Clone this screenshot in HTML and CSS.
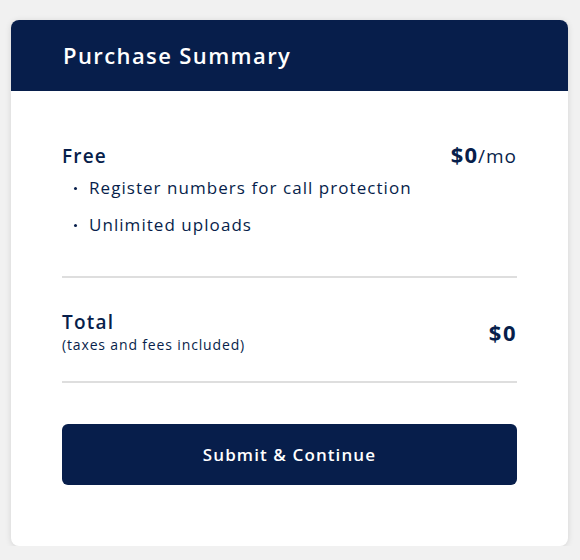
FILE: index.html
```html
<!DOCTYPE html>
<html>
<head>
<meta charset="utf-8">
<link rel="stylesheet" href="styles.css">
</head>
<body>
<div class="card">
  <div class="card-header">
    <h1 class="title">Purchase Summary</h1>
  </div>
  <div class="card-body">
    <div class="plan">
      <div class="row">
        <div class="plan-name">Free</div>
        <div class="price"><b>$0</b>/mo</div>
      </div>
      <ul class="features">
        <li>Register numbers for call protection</li>
        <li>Unlimited uploads</li>
      </ul>
    </div>
    <div class="total">
      <div class="total-left">
        <div class="total-label">Total</div>
        <div class="total-note">(taxes and fees included)</div>
      </div>
      <div class="total-amount">$0</div>
    </div>
    <button class="submit">Submit &amp; Continue</button>
  </div>
</div>
</body>
</html>
```
FILE: styles.css
```css
html, body {
  margin: 0;
  padding: 0;
  background: #f1f1f1;
  font-family: "Open Sans", "DejaVu Sans", sans-serif;
  color: #071e4b;
}
body {
  padding: 20px 11px 0 11px;
}
.card {
  width: 557px;
  height: 526px;
  background: #fff;
  border-radius: 8px;
  overflow: hidden;
  box-shadow: 0 1px 6px rgba(0,0,0,0.12);
}
.card-header {
  background: #071e4b;
  height: 71px;
  display: flex;
  align-items: center;
  padding-left: 52px;
}
.title {
  margin: 0 0 2px 0;
  color: #fff;
  font-size: 22px;
  font-weight: 600;
  letter-spacing: 1.4px;
}
.card-body {
  padding: 48px 51px 0 51px;
}
.plan {
  padding-bottom: 33px;
  border-bottom: 2px solid #dedede;
}
.row {
  display: flex;
  justify-content: space-between;
  align-items: baseline;
}
.plan-name {
  font-size: 19px;
  font-weight: 600;
  letter-spacing: 1.2px;
}
.price {
  font-size: 19px;
  letter-spacing: 1px;
}
.price b {
  font-weight: 700;
  font-size: 22px;
}
.features {
  list-style: none;
  margin: 0;
  padding: 0;
}
.features li {
  font-size: 17px;
  line-height: 37px;
  padding-left: 27px;
  position: relative;
  letter-spacing: 1.05px;
}
.features li::before {
  content: "";
  position: absolute;
  left: 12px;
  top: 18px;
  width: 3px;
  height: 3px;
  border-radius: 50%;
  background: #071e4b;
}
.total {
  display: flex;
  justify-content: space-between;
  align-items: center;
  padding: 32px 0 27px 0;
  border-bottom: 2px solid #dedede;
}
.total-label {
  font-size: 19px;
  font-weight: 600;
  line-height: 24px;
  margin-bottom: 2px;
  letter-spacing: 1.2px;
}
.total-note {
  font-size: 14px;
  line-height: 18px;
  letter-spacing: 0.85px;
}
.total-amount {
  font-size: 22px;
  font-weight: 700;
  letter-spacing: 1.5px;
}
.submit {
  display: block;
  width: 100%;
  height: 61px;
  margin-top: 41px;
  border: none;
  border-radius: 6px;
  background: #071e4b;
  color: #fff;
  font-family: inherit;
  font-size: 17px;
  font-weight: 600;
  letter-spacing: 1.1px;
}
```
